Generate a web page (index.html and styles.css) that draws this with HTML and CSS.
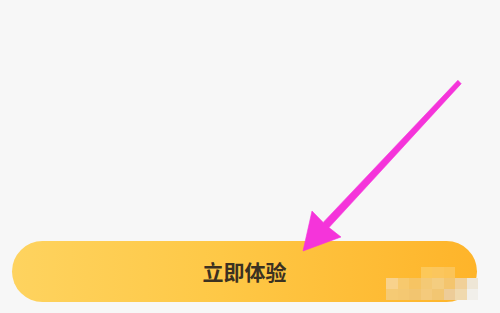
FILE: index.html
```html
<!DOCTYPE html>
<html lang="zh">
<head>
<meta charset="utf-8">
<link rel="stylesheet" href="styles.css">
</head>
<body>
<div class="page">
  <button class="cta">立即体验</button>
  <svg class="arrow" width="500" height="313" viewBox="0 0 500 313">
    <polygon points="457.9,80.3 461.2,83.7 329,227.6 341,237 303,251 312,211 323.2,222.4" fill="#f534da" stroke="#f534da" stroke-width="0.6" stroke-linejoin="round"/>
  </svg>
  <div class="mosaic">
    <span class="c" style="grid-column:4;background:#fcc859"></span>
    <span class="c" style="grid-column:5;background:#fbc65d"></span>
    <span class="c" style="grid-column:6;background:#fbc458"></span>
    <span class="c" style="grid-column:1;background:#f8d28c"></span>
    <span class="c" style="background:#f7c96e"></span>
    <span class="c" style="background:#f6c463"></span>
    <span class="c" style="background:#f4c975"></span>
    <span class="c" style="background:#f4cd80"></span>
    <span class="c" style="background:#f4c56e"></span>
    <span class="c" style="background:#f1d098"></span>
    <span class="c" style="background:#eee6d6"></span>
    <span class="c" style="background:#f5ca74"></span>
    <span class="c" style="background:#f4c872"></span>
    <span class="c" style="background:#f2c570"></span>
    <span class="c" style="background:#f4ca7c"></span>
    <span class="c" style="background:#f2c672"></span>
    <span class="c" style="background:#edcc98"></span>
    <span class="c" style="background:#f0d9ae"></span>
    <span class="c" style="background:#f1efea"></span>
  </div>
</div>
</body>
</html>
```

FILE: styles.css
```css
html, body {
  margin: 0;
  padding: 0;
  background: #f7f7f7;
}
.page {
  position: relative;
  width: 500px;
  height: 313px;
  overflow: hidden;
  display: flex;
  flex-direction: column;
  justify-content: flex-end;
  padding: 0 23px 11px 12px;
  box-sizing: border-box;
}
.cta {
  width: 465px;
  height: 61px;
  border: none;
  border-radius: 31px;
  background: linear-gradient(90deg, #fed35f 0%, #fec846 45%, #feb42a 100%);
  color: #3b3121;
  font-family: "Noto Sans CJK SC", "Noto Sans", sans-serif;
  font-size: 21px;
  font-weight: 700;
  padding: 0 0 2px 0;
  margin: 0;
}
.arrow {
  position: absolute;
  left: 0;
  top: 0;
}
.mosaic {
  position: absolute;
  left: 386px;
  top: 267px;
  display: grid;
  grid-template-columns: repeat(8, 11.5px);
  grid-auto-rows: 11px;
  filter: blur(0.6px);
}
.c {
  display: block;
}
```
